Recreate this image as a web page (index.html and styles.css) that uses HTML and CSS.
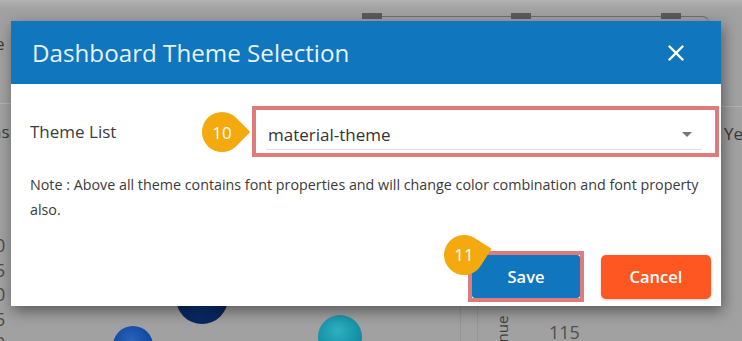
FILE: index.html
```html
<!DOCTYPE html>
<html lang="en">
<head>
    <meta charset="UTF-8">
    <meta name="viewport" content="width=device-width, initial-scale=1.0">
    <title>Dashboard Theme Selection</title>
    <link rel="stylesheet" href="styles.css">
</head>
<body>
    <div class="page">
        <!-- Dashboard behind the overlay -->
        <div class="dash">
            <div class="toolbar">
                <span class="handle h1"></span>
                <span class="handle h2"></span>
                <span class="handle h3"></span>
            </div>
            <span class="frag frag-e">e</span>
            <span class="frag frag-ns">ns</span>
            <span class="frag frag-ye">Ye</span>
            <div class="rule rule-left"></div>
            <div class="rule rule-right"></div>
            <div class="axis">
                <span>0</span>
                <span>5</span>
                <span>0</span>
                <span>5</span>
                <span>0</span>
            </div>
            <span class="bubble navy" style="left:176px;top:272px;width:52px;height:52px"></span>
            <span class="bubble blue" style="left:113px;top:326px;width:40px;height:40px"></span>
            <span class="bubble teal" style="left:318px;top:315px;width:44px;height:44px"></span>
            <div class="cell cell-a"></div>
            <div class="cell cell-b"></div>
            <span class="revenue">Revenue</span>
            <span class="value">115</span>
        </div>

        <!-- Theme dialog -->
        <div class="modal">
            <div class="modal-header">
                <h2>Dashboard Theme Selection</h2>
                <button class="close" aria-label="Close">
                    <svg width="16" height="16" viewBox="0 0 16 16">
                        <path d="M1.5 1.5 L14.5 14.5 M14.5 1.5 L1.5 14.5" stroke="#fff" stroke-width="2.4" stroke-linecap="round"/>
                    </svg>
                </button>
            </div>
            <div class="modal-body">
                <div class="field">
                    <label for="theme">Theme List</label>
                    <div class="highlight select-wrap">
                        <span class="badge badge-right">10</span>
                        <div class="select">
                            <span id="theme">material-theme</span>
                            <svg width="10" height="5" viewBox="0 0 10 5"><path d="M0 0 L10 0 L5 5 Z" fill="#757575"/></svg>
                        </div>
                    </div>
                </div>
                <p class="note">Note : Above all theme contains font properties and will change color combination and font property also.</p>
            </div>
            <div class="modal-footer">
                <div class="highlight save-wrap">
                    <span class="badge badge-up">11</span>
                    <button class="btn btn-save">Save</button>
                </div>
                <button class="btn btn-cancel">Cancel</button>
            </div>
        </div>
    </div>
</body>
</html>
```

FILE: styles.css
```css
/* General Styles */
* {
    box-sizing: border-box;
}
body {
    margin: 0;
    font-family: "Open Sans", Lato, sans-serif;
    background-color: #a1a1a1;
    overflow: hidden;
}
.page {
    position: relative;
    width: 742px;
    height: 341px;
    overflow: hidden;
    background: linear-gradient(#b2b2b2 0, #a3a3a3 8px, #a1a1a1 14px);
}

/* Dashboard under the overlay */
.dash {
    position: relative;
    height: 100%;
    color: #3a3a3a;
}
.toolbar {
    position: absolute;
    left: 362px;
    top: 16px;
    width: 348px;
    height: 30px;
    border-top: 1px solid #6f6f6f;
    border-right: 1px solid #8c8c8c;
    border-radius: 0 8px 0 0;
}
.handle {
    position: absolute;
    top: -4px;
    width: 20px;
    height: 6px;
    background: #5a5a5a;
}
.h1 { left: 0; }
.h2 { left: 149px; }
.h3 { left: 299px; }
.frag {
    position: absolute;
    font-size: 17px;
}
.frag-e { left: -5px; top: 32px; }
.frag-ns { left: -9px; top: 120px; }
.frag-ye { left: 724px; top: 122px; }
.rule {
    position: absolute;
    height: 1px;
    background: #b4b4b4;
}
.rule-left { left: 0; width: 20px; top: 103px; }
.rule-right { left: 700px; width: 42px; top: 106px; }
.axis {
    position: absolute;
    left: -5px;
    top: 233px;
    display: flex;
    flex-direction: column;
    font-size: 18px;
    line-height: 24.5px;
    color: #4a4a4a;
}
.bubble {
    position: absolute;
    border-radius: 50%;
}
.navy { background: radial-gradient(circle at 45% 35%, #173f86, #082a66 60%, #05224f); }
.blue { background: radial-gradient(circle at 45% 35%, #2a62b9, #10489f 60%, #0a3a85); }
.teal { background: radial-gradient(circle at 45% 35%, #2fb0bf, #128fa6 60%, #0a7590); }
.cell {
    position: absolute;
    top: 300px;
    width: 1px;
    height: 41px;
    background: #969696;
}
.cell-a { left: 460px; }
.cell-b { left: 477px; }
.revenue {
    position: absolute;
    left: 492px;
    top: 376px;
    font-size: 15px;
    color: #3f3f3f;
    transform: rotate(-90deg);
    transform-origin: 0 0;
}
.value {
    position: absolute;
    left: 549px;
    top: 320px;
    font-size: 18px;
    color: #4f4f4f;
}

/* Dialog */
.modal {
    position: absolute;
    left: 11px;
    top: 21px;
    width: 710px;
    height: 285px;
    background: white;
    box-shadow: 2px 5px 14px rgba(0, 0, 0, 0.45);
}
.modal-header {
    display: flex;
    align-items: center;
    justify-content: space-between;
    height: 63px;
    padding: 0 37px 0 21px;
    background-color: #1076bd;
}
.modal-header h2 {
    margin: 0;
    font-size: 24.2px;
    font-weight: 400;
    color: #e6f3fc;
}
.close {
    display: flex;
    padding: 0;
    border: none;
    background: none;
    cursor: pointer;
}
.modal-body {
    padding: 22px 2px 0 19px;
}
.field {
    display: flex;
    align-items: center;
}
.field label {
    width: 222px;
    font-size: 17px;
    color: #3c3c3c;
}
.highlight {
    position: relative;
    border: 4px solid #df7b7b;
}
.select-wrap {
    width: 467px;
    height: 51px;
    padding: 9px 13px 0 10px;
}
.select {
    display: flex;
    align-items: center;
    justify-content: space-between;
    height: 31px;
    padding: 0 10px 0 2px;
    border-bottom: 1px solid #dcdcdc;
    font-size: 17px;
    color: #333;
}
.note {
    max-width: 680px;
    margin: 15px 0 0;
    font-size: 14.3px;
    line-height: 25px;
    color: #3a3a3a;
}

/* Numbered callouts */
.badge {
    position: absolute;
    z-index: 1;
    display: flex;
    align-items: center;
    justify-content: center;
    width: 40px;
    height: 40px;
    font-size: 17px;
    color: white;
}
.badge::before {
    content: "";
    position: absolute;
    inset: 0;
    z-index: -1;
    background: #f4a90e;
    border-radius: 50% 50% 0 50%;
}
.badge-right {
    left: -54px;
    top: 2px;
}
.badge-right::before {
    transform: rotate(-45deg);
}
.badge-up {
    left: -28px;
    top: -20px;
    padding-bottom: 2px;
}
.badge-up::before {
    transform: rotate(-58deg);
}

.modal-footer {
    display: flex;
    justify-content: flex-end;
    align-items: center;
    gap: 17px;
    padding: 29px 10px 0 0;
}
.save-wrap {
    display: flex;
}
.btn {
    height: 43px;
    padding: 0;
    border: none;
    border-radius: 3px;
    font-family: inherit;
    font-size: 16.5px;
    font-weight: 600;
    color: white;
    cursor: pointer;
}
.btn-save {
    width: 108px;
    background-color: #1076bd;
}
.btn-cancel {
    width: 110px;
    height: 44px;
    border-radius: 5px;
    background-color: #fe5722;
    box-shadow: 0 1px 3px rgba(0, 0, 0, 0.2);
}
```
